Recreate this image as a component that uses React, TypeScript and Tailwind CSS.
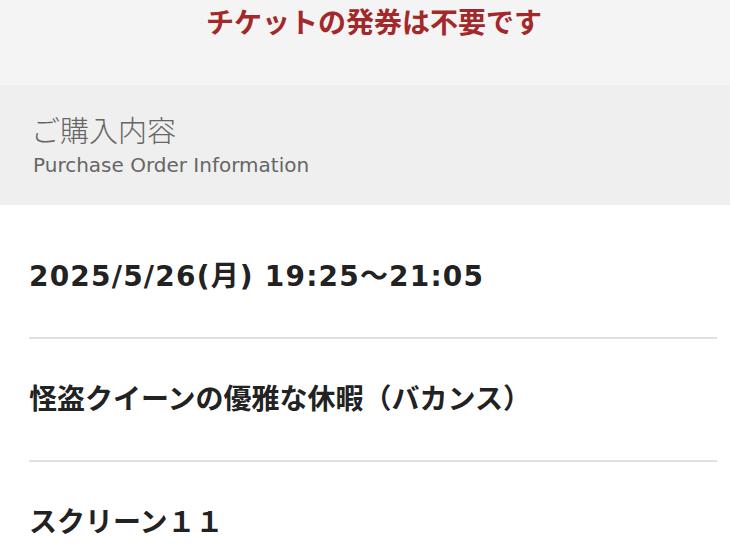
import React from 'react';

const rows = ['2025/5/26(月) 19:25〜21:05', '怪盗クイーンの優雅な休暇（バカンス）', 'スクリーン１１'];

const font = { fontFamily: '"DejaVu Sans", "Noto Sans CJK JP", sans-serif' };

export default function App() {
  return (
    <div className="min-h-screen w-full bg-white" style={font}>
      <div className="h-[85px] bg-[#f4f4f4] pt-[4px] text-center">
        <p className="text-[28px] leading-[40px] font-bold text-[#a3282a] pl-[18px]">チケットの発券は不要です</p>
      </div>

      <header className="h-[120px] bg-[#efefef] px-[31px] pt-[29px]">
        <h2 className="text-[29px] leading-[36px] text-[#666666] font-light">ご購入内容</h2>
        <p className="mt-[3px] pl-[2px] text-[20px] leading-[24px] text-[#666666]">Purchase Order Information</p>
      </header>

      <section className="pl-[29px] pr-[13px] pt-[11px]">
        {rows.map((text, index) => (
          <div
            key={index}
            className={`${index < rows.length - 1 ? 'border-b-2 border-[#e0e0e0]' : ''} pt-[43px] pb-[42px]`}
          >
            <p
              className={`${index === 0 ? 'tracking-[1.2px]' : ''} text-[28px] leading-[36px] font-bold text-[#222222]`}
            >
              {text}
            </p>
          </div>
        ))}
      </section>
    </div>
  );
}
